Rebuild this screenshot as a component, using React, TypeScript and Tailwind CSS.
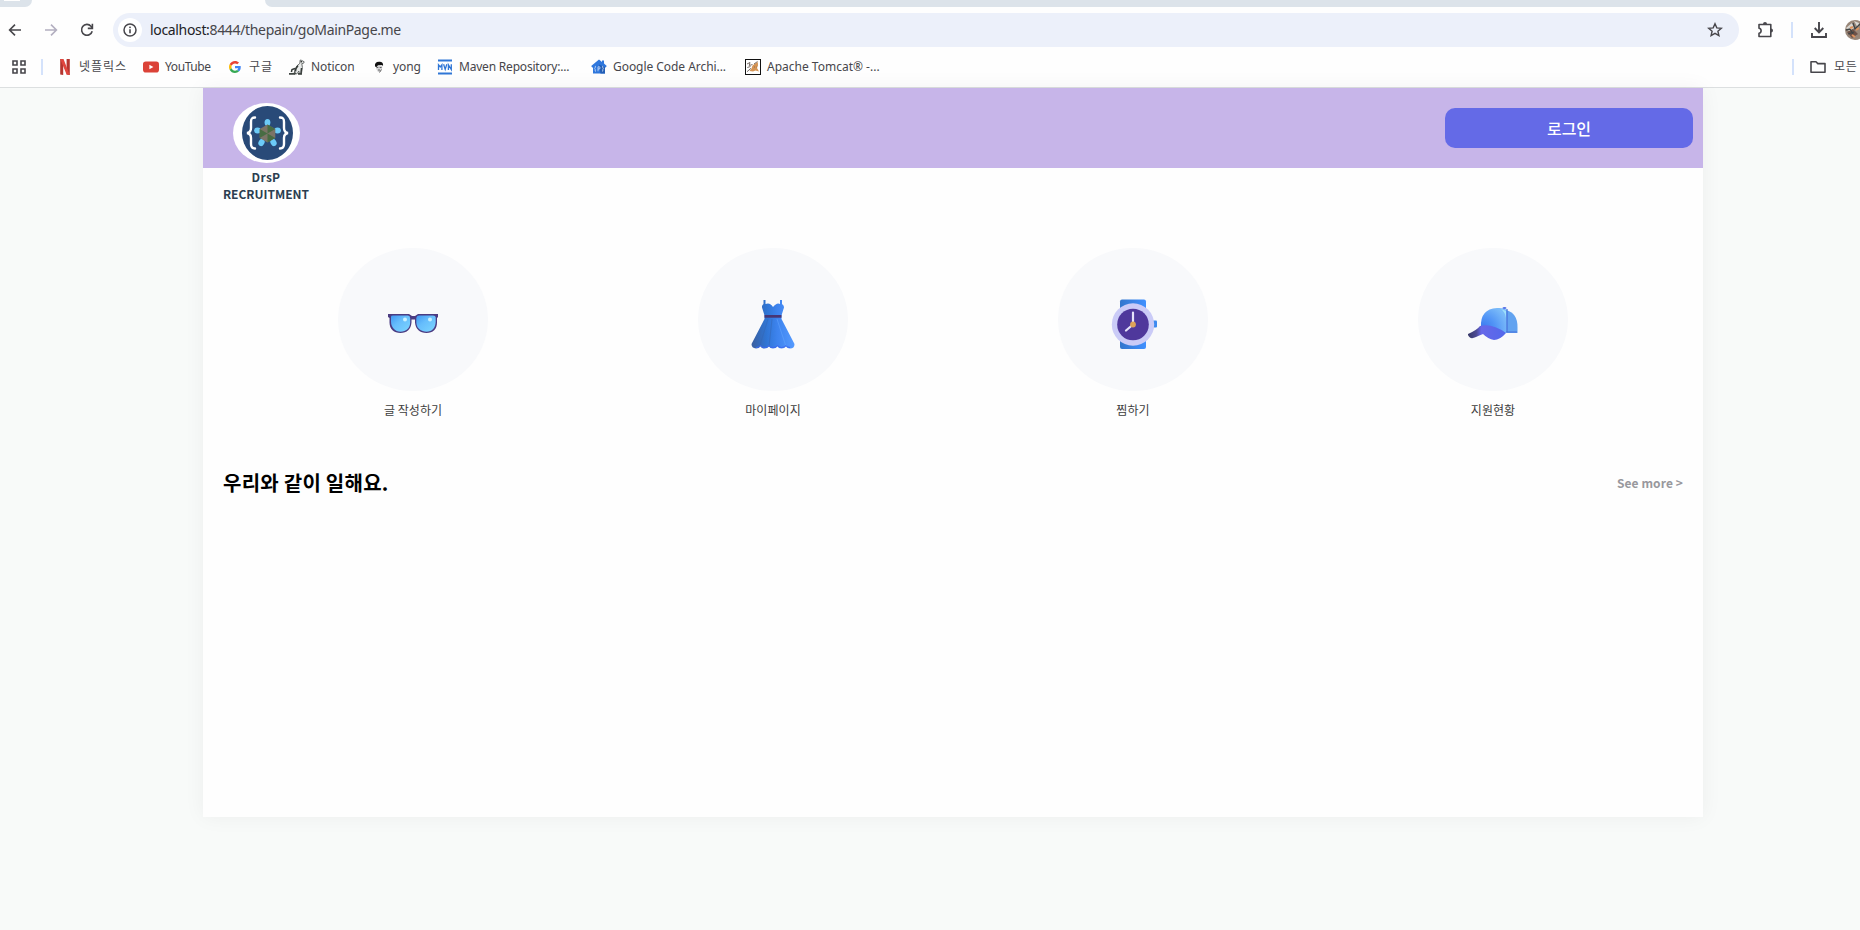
import React from "react";

const stroke = { fill: "none", stroke: "#47464b", strokeWidth: 1.8 } as const;

function BackIcon({ color, flip }: { color: string; flip?: boolean }) {
  return (
    <svg width="16" height="16" viewBox="0 0 16 16" className={flip ? "shrink-0 rotate-180" : "shrink-0"}>
      <path d="M14 8H3M8 2.6L2.6 8L8 13.4" fill="none" stroke={color} strokeWidth="1.6" />
    </svg>
  );
}

function ReloadIcon() {
  return (
    <svg width="16" height="16" viewBox="0 0 16 16">
      <path d="M13.2 9.2A5.4 5.4 0 1 1 12 4.2L13.4 6" {...stroke} strokeWidth="1.6" />
      <path d="M13.4 1.8V6.4H8.8" {...stroke} strokeWidth="1.6" />
    </svg>
  );
}

function InfoIcon() {
  return (
    <svg width="16" height="16" viewBox="0 0 16 16">
      <circle cx="8" cy="8" r="6" fill="none" stroke="#47464b" strokeWidth="1.5" />
      <path d="M8 7.2V11.2" stroke="#47464b" strokeWidth="1.6" />
      <rect x="7.2" y="4.6" width="1.6" height="1.5" fill="#47464b" />
    </svg>
  );
}

function NetflixIcon() {
  return (
    <svg width="16" height="16" viewBox="0 0 16 16">
      <path d="M3.2 0H6.2V16L3.2 15.6Z" fill="#b5352f" />
      <path d="M9.6 0H12.8V16L9.6 15.6Z" fill="#b5352f" />
      <path d="M3.2 0H6.5L12.8 16L9.6 15.6Z" fill="#e0463e" />
    </svg>
  );
}

function YoutubeIcon() {
  return (
    <svg width="16" height="16" viewBox="0 0 16 16">
      <rect x="0" y="2.4" width="16" height="11.2" rx="2.8" fill="#db4238" />
      <path d="M6.4 5.8V10.2L10.4 8Z" fill="#fff" />
    </svg>
  );
}

function GoogleIcon() {
  return (
    <svg width="12" height="12" viewBox="0 0 48 48">
      <path fill="#EA4335" d="M24 9.5c3.5 0 6.7 1.2 9.2 3.6l6.9-6.9C35.9 2.4 30.5 0 24 0 14.6 0 6.5 5.4 2.6 13.2l8 6.200C12.400 13.700 17.700 9.500 24 9.500z" />
      <path fill="#4285F4" d="M47 24.600c0-1.600-.2-3.100-.4-4.600H24v9h12.900c-.6 3-2.300 5.500-4.800 7.200l7.700 6C44.400 38 47 31.800 47 24.600z" />
      <path fill="#FBBC05" d="M10.500 28.600c-.5-1.500-.8-3-.8-4.600s.3-3.100.8-4.600l-8-6.200C.9 16.500 0 20.100 0 24s.9 7.500 2.600 10.800z" />
      <path fill="#34A853" d="M24 48c6.500 0 11.900-2.100 15.900-5.800l-7.700-6c-2.200 1.500-4.900 2.300-8.200 2.300-6.300 0-11.600-4.200-13.500-9.900l-8 6.200C6.500 42.600 14.600 48 24 48z" />
    </svg>
  );
}

function NoticonIcon() {
  return (
    <svg width="16" height="16" viewBox="0 0 16 16">
      <path d="M11.2 1L12.6 1.4L15.2 2.8L14.6 4.2L12.8 4.6L13.4 8.5L12.4 14.8H10.4L9.8 12L8 14.8H5L6 10.5L7.8 7L10.8 4.4Z" fill="#e9ebea" stroke="#5b605f" strokeWidth=".9" />
      <path d="M9 6.500L7 9.500L6.400 12.500M12.500 9L12 14M6 9.500L3 10.500L2.400 13" fill="none" stroke="#343a38" strokeWidth="1.500" />
      <path d="M0 14.800H5.500L6.500 13.500M9 14.800H13" fill="none" stroke="#3f4542" strokeWidth="1.800" />
      <circle cx="12.300" cy="2.800" r=".7" fill="#111" />
    </svg>
  );
}

function YongIcon() {
  return (
    <svg width="16" height="16" viewBox="0 0 16 16">
      <path d="M5 6.500H11.400L11 10L9 13H7L5.200 10Z" fill="#d5d5d7" />
      <path d="M4 7.500C3.500 4.500 5 2.800 8 2.800S12.600 4.300 12 7L11 6L7 6.200L5.500 8Z" fill="#111" />
      <path d="M5.500 8.500H7.300M8.700 8.500H10.600M7 11H9M8.500 13.500L10.500 10.500" stroke="#555" strokeWidth=".9" fill="none" />
    </svg>
  );
}

function MavenIcon() {
  return (
    <svg width="16" height="16" viewBox="0 0 16 16">
      <path d="M1 1.500H15M1 14.500H15" stroke="#2f76d6" strokeWidth="2" />
      <path d="M1.500 11V5.800L3.200 8L4.900 5.800V11M6.600 5.200L8.200 10.400L9.800 5.200M11.400 11V5.800L14.300 10.500V5.200" fill="none" stroke="#2f76d6" strokeWidth="1.300" />
    </svg>
  );
}

function CodeArchiveIcon() {
  return (
    <svg width="16" height="16" viewBox="0 0 16 16">
      <path d="M8 .6L11 3V1.600H13V4.600L15.800 7L14.600 8.400H14V14.600H2V8.400H1.200L.2 7Z" fill="#2f77dc" />
      <path d="M8 5.500L14 8V14.600H9.500Z" fill="#245fb5" />
      <path d="M5 7L4.200 7.600V9L3.500 9.800L4.200 10.500V12L5 12.600M11 7L11.800 7.600V9L12.500 9.800L11.800 10.500V12L11 12.600M7 12.300V7.800H8.600Q9.500 8.800 8.600 10H7" fill="none" stroke="#e1edff" strokeWidth=".7" />
    </svg>
  );
}

function TomcatIcon() {
  return (
    <svg width="16" height="16" viewBox="0 0 16 16">
      <rect x=".5" y=".5" width="15" height="15" fill="#fff" stroke="#111" />
      <path d="M7.500 6.500L9.500 5L12.800 3L13 6.500L12 9L14 12.600L10.500 11.400L8 12.600L4.500 12L6.500 9.500Z" fill="#d59454" />
      <path d="M2 5L5 3.500L4.200 6.500L7.500 5.500M2.300 8.500L5.500 7.500M2 12.700L6 9.300M9 5L12.500 2.500M9.200 8H10M11.500 8H12" fill="none" stroke="#6b5f58" strokeWidth=".9" />
    </svg>
  );
}

const bookmarks = [
  { label: "넷플릭스", icon: <NetflixIcon />, box: "w-[86px]", text: "tracking-[1px]" },
  { label: "YouTube", icon: <YoutubeIcon />, box: "w-[84px]", text: "tracking-[-0.4px]" },
  { label: "구글", icon: <GoogleIcon />, box: "w-[62px]", text: "tracking-[1px]" },
  { label: "Noticon", icon: <NoticonIcon />, box: "w-[82px]", text: "tracking-[-0.1px]" },
  { label: "yong", icon: <YongIcon />, box: "w-[66px]", text: "tracking-[-0.1px]" },
  { label: "Maven Repository:...", icon: <MavenIcon />, box: "w-[154px]", text: "tracking-[-0.2px]" },
  { label: "Google Code Archi...", icon: <CodeArchiveIcon />, box: "w-[154px]", text: "tracking-[-0.05px]" },
  { label: "Apache Tomcat® -...", icon: <TomcatIcon />, box: "w-[136px]", text: "" },
];

function BrowserChrome() {
  return (
    <div className="h-[88px] border-b border-[#dcdfe0] bg-[#fefefe] font-['Noto_Sans','Noto_Sans_CJK_KR',sans-serif] text-[#47464b]">
      <div className="flex h-[7px]">
        <div className="flex w-8 justify-center rounded-br-[10px] bg-[#dce3ea] pr-2">
          <div className="h-px w-4 bg-white" />
        </div>
        <div className="w-[233px]" />
        <div className="flex-1 rounded-bl-[10px] bg-[#dce3ea]" />
      </div>
      <div className="flex h-[46px] items-center overflow-hidden pl-[7px]">
        <BackIcon color="#47464b" />
        <div className="ml-5 shrink-0">
          <BackIcon color="#b3afc0" flip />
        </div>
        <div className="ml-5 shrink-0">
          <ReloadIcon />
        </div>
        <div className="ml-[18px] flex h-[34px] w-[1626px] shrink-0 items-center rounded-full bg-[#ecf0fa] pr-4 pl-[5px]">
          <div className="flex size-6 items-center justify-center rounded-full bg-white">
            <InfoIcon />
          </div>
          <span className="ml-2 flex-1 text-[14px] leading-5 tracking-[-0.34px] whitespace-nowrap">
            <span className="text-[#222226]">localhost:</span>8444/thepain/goMainPage.me
          </span>
          <svg width="16" height="16" viewBox="0 0 16 16">
            <path d="M8 1.800L9.800 5.900L14.300 6.300L10.900 9.200L11.900 13.600L8 11.300L4.100 13.600L5.100 9.200L1.700 6.300L6.200 5.900Z" fill="none" stroke="#47464b" strokeWidth="1.400" />
          </svg>
        </div>
        <svg className="ml-[18px] shrink-0" width="18" height="18" viewBox="0 0 18 18">
          <path d="M2 3.500H13.800V15.500H2V12.200C4.800 12 4.800 7.500 2 7.300Z" fill="none" stroke="#47464b" strokeWidth="1.600" strokeLinejoin="round" />
          <path d="M6 3A2 2 0 0 1 10 3ZM14 7.500A2 2 0 0 1 14 11.500Z" fill="#47464b" />
        </svg>
        <div className="ml-4 h-4 w-0.5 shrink-0 bg-[#d4e2fb]" />
        <svg className="ml-[18px] shrink-0" width="16" height="16" viewBox="0 0 16 16">
          <path d="M8 0V10M3.700 6L8 10.300L12.300 6M1 11V15H15V11" fill="none" stroke="#47464b" strokeWidth="1.900" />
        </svg>
        <svg className="ml-[18px] shrink-0" width="20" height="20" viewBox="0 0 20 20">
          <circle cx="10" cy="10" r="10" fill="#998779" />
          <path d="M1 8L7 3L9 8L4 11ZM9 1L14 3L13 8Z" fill="#d9d7d2" />
          <path d="M2 12L8 9L13 14L7 18ZM5 5L9 3" fill="#6d5147" />
          <path d="M1 10L5 9L8 14M8 3L10 9L15 4M3 14L9 12" stroke="#3f4445" strokeWidth="1.300" fill="none" />
          <path d="M5 8L8 7M7 15L10 17M11 10L14 8" stroke="#df925c" strokeWidth="2" />
        </svg>
      </div>
      <div className="flex h-[27px] items-center overflow-hidden pl-[11px] text-[12px]">
        <svg width="16" height="16" viewBox="0 0 16 16" className="shrink-0">
          <path d="M2 2H6V6H2ZM10 2H14V6H10ZM2 10H6V14H2ZM10 10H14V14H10Z" {...stroke} strokeWidth="1.600" />
        </svg>
        <div className="ml-3.5 h-4 w-0.5 shrink-0 bg-[#d4e2fb]" />
        <div className="ml-[14px] flex">
          {bookmarks.map((b) => (
            <div key={b.label} className={`flex shrink-0 items-center ${b.box}`}>
              <span className="flex size-4 shrink-0 items-center justify-center">{b.icon}</span>
              <span className={`ml-1.5 leading-4 whitespace-nowrap ${b.text}`}>{b.label}</span>
            </div>
          ))}
        </div>
        <div className="ml-[911px] h-4 w-0.5 shrink-0 bg-[#d4e2fb]" />
        <svg className="ml-4 shrink-0" width="16" height="16" viewBox="0 0 16 16">
          <path d="M1 2.800H6L7.800 4.600H15V13.200H1Z" fill="none" stroke="#47464b" strokeWidth="1.600" strokeLinejoin="round" />
        </svg>
        <span className="ml-2 shrink-0 tracking-[0.8px] whitespace-nowrap">모든</span>
      </div>
    </div>
  );
}

function Logo() {
  return (
    <svg width="67" height="60" viewBox="0 0 67 60">
      <ellipse cx="33.5" cy="30" rx="33.500" ry="30" fill="#fff" />
      <ellipse cx="34.500" cy="30" rx="25.500" ry="27" fill="#294a78" />
      <path d="M22 14.500C18.500 14.500 18 16 18 19V25C18 28 17 29.500 14 30C17 30.500 18 32 18 35V41C18 44 19 45.500 22 45.500M47 14.500C50.500 14.500 51 16 51 19V25C51 28 52 29.500 55 30C52 30.500 51 32 51 35V41C51 44 50 45.500 47 45.500" fill="none" stroke="#fff" strokeWidth="2.400" strokeLinecap="round" />
      <g fill="#6ccbf8">
        <ellipse cx="34.500" cy="19.500" rx="2.900" ry="3.500" />
        <ellipse cx="24.500" cy="27.500" rx="3.400" ry="3" />
        <ellipse cx="44.500" cy="27.500" rx="3.400" ry="3" />
        <ellipse cx="28.500" cy="39.500" rx="2.900" ry="3.700" transform="rotate(30 28.500 39.500)" />
        <ellipse cx="40.500" cy="39.500" rx="2.900" ry="3.700" transform="rotate(-30 40.500 39.500)" />
      </g>
      <path d="M34.500 21.500L42.300 26V35L34.500 39.500L26.700 35V26Z" fill="#7b7467" />
      <path d="M34.500 21.500L42.300 26L34.500 30.500ZM42.300 35L34.500 39.500V30.500ZM26.700 35V26L34.500 30.500Z" fill="#486c43" />
    </svg>
  );
}

function GlassesIcon() {
  return (
    <svg width="50" height="50" viewBox="0 .5 50 50">
      <defs>
        <linearGradient id="lens" x1="0" y1="0" x2="1" y2="1">
          <stop offset="0" stopColor="#4098f2" />
          <stop offset=".4" stopColor="#66bdfc" />
          <stop offset="1" stopColor="#7cd6ff" />
        </linearGradient>
      </defs>
      <path d="M0 15.500H21L24 17.500H27L30 15.500H50V18.500L49 19.500V24C49 30.500 45 34.500 38.500 34.500S27.500 30.500 27 24V21H23.500V24C23 30.500 19 34.500 12.500 34.500S1.500 30.500 1.500 24V19.500L0 18.500Z" fill="#4b3c82" />
      <path d="M3 18Q3 17 5 17H20Q22.200 17.200 22.200 20V24C22 30 18 33.200 12.500 33.200S3 29 3 23Z" fill="url(#lens)" />
      <path d="M28.300 20Q28.500 17 31 17H45Q47.700 17 47.700 19V23C47.700 29.500 44 33.200 38.500 33.200S28.500 30 28.300 24Z" fill="url(#lens)" />
      <circle cx="17" cy="21" r="2" fill="#c9f1ff" />
      <circle cx="42" cy="21" r="2" fill="#c9f1ff" />
    </svg>
  );
}

function DressIcon() {
  return (
    <svg width="50" height="50" viewBox="0 0 50 50">
      <defs>
        <linearGradient id="dress">
          <stop offset="0" stopColor="#3b5f9e" />
          <stop offset=".35" stopColor="#2f75d4" />
          <stop offset=".6" stopColor="#3d83ee" />
          <stop offset="1" stopColor="#559bff" />
        </linearGradient>
      </defs>
      <path d="M15.500 1H17.500V5Q22 3 25 8Q29 3 32 5V1H34V5Q37 7 35.500 10L33.500 16.500V20L46.500 45Q46.500 49.500 42 49.500Q39 49.500 38 47.500Q36.500 49.500 33.500 49.500Q30.500 49.500 29.500 47.500Q28 49.500 25 49.500Q22 49.500 21 47.500Q19.500 49.500 16.500 49.500Q13.500 49.500 12.500 47.500Q11 49.500 8 49.500Q3.500 49 3.500 45L16.500 20V16.500L14.500 10Q13 6.500 15.500 5Z" fill="url(#dress)" />
      <path d="M20 20L11.500 47.500M24 20L21 47.500" stroke="#3567b4" strokeWidth="1" opacity=".5" />
      <path d="M29 20L38 47.500" stroke="#65a7ff" strokeWidth="1" opacity=".5" />
      <rect x="16.500" y="16" width="17" height="2.700" fill="#483574" />
      <path d="M8 48.500Q11 48.500 12.500 46.500Q14 48.500 16.500 48.500Q19.500 48.500 21 46.500Q22 48.500 25 48.500Q28 48.500 29.500 46.500Q31 48.500 33.500 48.500Q36.500 48.500 38 46.500Q39 48.500 42 48.500" fill="none" stroke="#3e68f0" strokeWidth="1" />
    </svg>
  );
}

function WatchIcon() {
  return (
    <svg width="50" height="50" viewBox="0 0 50 50">
      <defs>
        <linearGradient id="strap">
          <stop offset="0" stopColor="#3276cc" />
          <stop offset="1" stopColor="#4090ff" />
        </linearGradient>
      </defs>
      <rect x="12" y=".5" width="26" height="49.5" rx="2" fill="url(#strap)" />
      <rect x="44" y="21.5" width="5" height="7" rx="1" fill="#3d8aef" />
      <circle cx="25" cy="25.500" r="21.200" fill="#cacbf7" />
      <circle cx="25" cy="25.500" r="15.800" fill="#4f389c" />
      <path d="M25 25.500V13.500M25 25.500L18 31.500" stroke="#e5e2fa" strokeWidth="2.200" strokeLinecap="round" />
      <circle cx="25" cy="25.500" r="2.900" fill="#dda259" />
    </svg>
  );
}

function CapIcon() {
  return (
    <svg width="50" height="50" viewBox="0 0 50 50">
      <defs>
        <radialGradient id="cap" cx=".05" cy=".85" r="1">
          <stop offset="0" stopColor="#3876ee" />
          <stop offset=".5" stopColor="#5295f6" />
          <stop offset="1" stopColor="#79baf9" />
        </radialGradient>
        <linearGradient id="brim" x1="0" x2="1">
          <stop offset="0" stopColor="#363866" />
          <stop offset=".22" stopColor="#4d4b94" />
          <stop offset=".35" stopColor="#6768e9" />
          <stop offset="1" stopColor="#5268eb" />
        </linearGradient>
      </defs>
      <path d="M38 11Q49.500 14 49.500 28V34H38Z" fill="#62a3f0" />
      <path d="M13 28Q12 10 29 9Q36 8.500 39 11V34H30Z" fill="url(#cap)" />
      <path d="M39 10V33M38 33H49" fill="none" stroke="#4770da" strokeWidth="1.200" />
      <ellipse cx="36.500" cy="9" rx="2" ry="1" fill="#5673e8" />
      <path d="M33 10L38 12V19Q37 13 33 10Z" fill="#9ee0fa" />
      <path d="M0 35Q9 31 12 27Q24 24 38 34Q32 41 26 41Q20 40 15 35Q10 37 8 38Q2 41 0 36Z" fill="url(#brim)" />
    </svg>
  );
}

const categories = [
  { label: "글 작성하기", icon: <GlassesIcon /> },
  { label: "마이페이지", icon: <DressIcon /> },
  { label: "찜하기", icon: <WatchIcon /> },
  { label: "지원현황", icon: <CapIcon /> },
];

export default function App() {
  return (
    <div className="h-[930px] w-[1860px] overflow-hidden bg-[#f8faf9] font-['Noto_Sans_CJK_KR',sans-serif]">
      <BrowserChrome />
      <main className="ml-[203px] flex h-[729px] w-[1500px] flex-col bg-[#fefefe] shadow-[0_0_20px_rgba(0,0,0,0.05)]">
        <header className="flex h-20 shrink-0 items-start justify-between bg-[#c7b5e9] pr-2.5 pl-5">
          <div className="flex w-[86px] flex-col items-center pt-[15px]">
            <Logo />
            <div className="mt-[5px] text-center text-[12px] leading-[17px] font-bold whitespace-nowrap text-[#2c3e50]">
              <div className="tracking-[0.3px]">DrsP</div>
              <div>RECRUITMENT</div>
            </div>
          </div>
          <button className="mt-5 h-10 w-[248px] rounded-[10px] bg-[#646ae7] pb-px text-base font-medium text-white">
            로그인
          </button>
        </header>
        <nav className="mx-[30px] mt-20 grid grid-cols-4">
          {categories.map((c) => (
            <div key={c.label} className="flex flex-col items-center">
              <div className="flex h-[143px] w-[150px] items-center justify-center rounded-[50%] bg-[#f8f9fb] pt-[9px]">
                {c.icon}
              </div>
              <span className="mt-2.5 text-[12px] leading-[18px] tracking-[0.05px] text-[#3d3d3d]">{c.label}</span>
            </div>
          ))}
        </nav>
        <section className="mt-[49px] flex items-center justify-between px-5">
          <h2 className="text-xl leading-[30px] font-bold tracking-[0.25px] text-black">우리와 같이 일해요.</h2>
          <span className="text-[12px] font-bold tracking-[0.1px] text-[#98989d]">See more &gt;</span>
        </section>
      </main>
    </div>
  );
}
